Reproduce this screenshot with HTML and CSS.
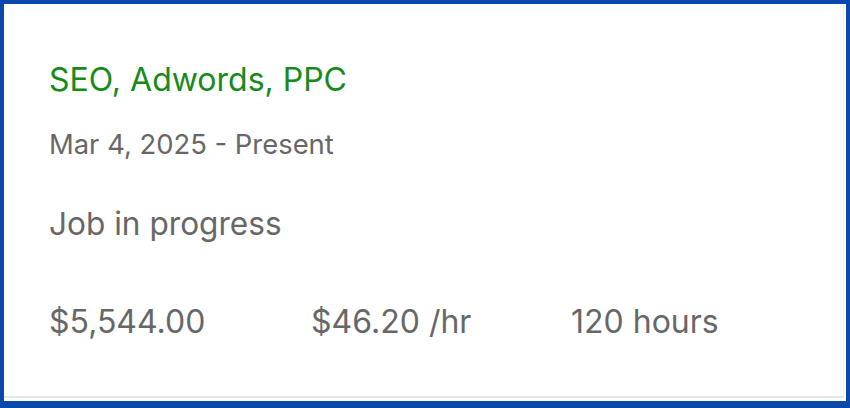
FILE: index.html
```html
<!DOCTYPE html>
<html lang="en">
<head>
    <meta charset="UTF-8">
    <title>Job</title>
    <link rel="stylesheet" href="styles.css">
</head>
<body>
<div class="card">
    <div class="job">
        <h2 class="job-title">SEO, Adwords, PPC</h2>
        <p class="job-date">Mar 4, 2025 - Present</p>
        <p class="job-status">Job in progress</p>
        <ul class="job-stats">
            <li>$5,544.00</li>
            <li>$46.20 /hr</li>
            <li>120 hours</li>
        </ul>
    </div>
</div>
</body>
</html>
```

FILE: styles.css
```css
* {
    padding: 0;
    margin: 0;
    list-style: none;
    box-sizing: border-box;
}

body {
    font-family: Inter, "Liberation Sans", Arial, sans-serif;
    color: #676767;
    background: #fff;
}

.card {
    width: 850px;
    height: 408px;
    padding: 0 2px 3px 0;
    border: solid #0b48ae;
    border-width: 4px 4px 7px 4px;
}

.job {
    height: 100%;
    padding: 58px 0 0 45px;
    border-bottom: 2px solid #e4e7e9;
    border-right: 1px solid #eceeef;
}

.job-title {
    font-size: 32px;
    font-weight: 400;
    line-height: 36px;
    color: #178a1c;
}

.job-date {
    margin-top: 30px;
    font-size: 27.4px;
    line-height: 32px;
}

.job-status {
    margin-top: 46px;
    font-size: 31.6px;
    line-height: 36px;
}

.job-stats {
    display: grid;
    grid-template-columns: 262px 260px auto;
    margin-top: 62px;
    font-size: 32px;
    line-height: 36px;
}
```
